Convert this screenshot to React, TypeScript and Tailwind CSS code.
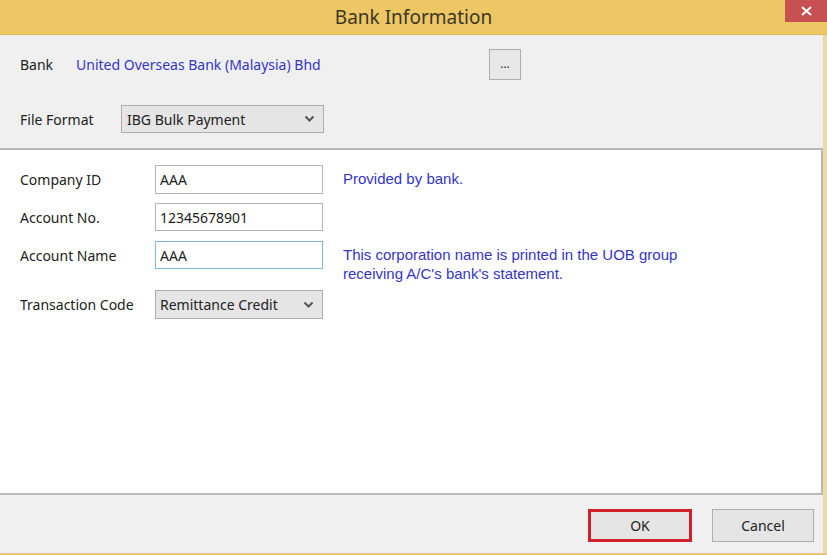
import React from "react";

const Chevron = () => (
  <svg width="11" height="8" viewBox="0 0 11 8" className="shrink-0">
    <path d="M1.5 1.5 L5.5 5.5 L9.5 1.5" fill="none" stroke="#555" strokeWidth="2" />
  </svg>
);

export default function App() {
  const ui = { fontFamily: '"Noto Sans", "Open Sans", sans-serif' };
  const arial = { fontFamily: '"Liberation Sans", Arial, sans-serif' };
  return (
    <div className="w-[827px] h-[555px] bg-[#f0f0f0] flex flex-col overflow-hidden text-[#222]" style={ui}>
      {/* title bar */}
      <div className="h-[35px] bg-[#ecc764] flex items-start shrink-0 border-b border-[#e0bb5a]">
        <div className="flex-1 h-[35px] flex items-center justify-center pl-[42px] text-[19px] text-[#3b3628]">
          Bank Information
        </div>
        <div className="w-[42px] h-[22px] bg-[#c75050] flex items-center justify-center text-white">
          <svg width="11" height="10" viewBox="0 0 11 10">
            <path d="M1 1 L10 9 M10 1 L1 9" stroke="white" strokeWidth="2" />
          </svg>
        </div>
      </div>

      <div className="flex-1 flex flex-col border-r-[4px] border-[#ecd9a4]">
        {/* top section */}
        <div className="h-[113px] shrink-0 flex flex-col pl-[20px]">
          <div className="flex items-center mt-[14px] h-[31px] text-[14px]">
            <span className="w-[56px]">Bank</span>
            <span className="text-[#3535c8] w-[413px]">United Overseas Bank (Malaysia) Bhd</span>
            <div className="w-[32px] h-[31px] border border-[#adadad] bg-[#e8e8e8] flex items-center justify-center text-[12px] text-[#333] leading-none pb-[2px]">
              ...
            </div>
          </div>
          <div className="flex items-center mt-[25px] h-[28px] text-[14px]">
            <span className="w-[101px]">File Format</span>
            <div className="w-[203px] h-[28px] border border-[#adadad] bg-[#e5e5e5] flex items-center justify-between pl-[5px] pr-[8px]">
              <span>IBG Bulk Payment</span>
              <Chevron />
            </div>
          </div>
        </div>

        {/* white panel */}
        <div className="flex-1 bg-white border-t-2 border-b-2 border-r-2 border-[#b9b9b9] flex flex-col pl-[20px] pt-[15px] text-[14px]">
          <div className="flex items-center h-[29px]">
            <span className="w-[135px]">Company ID</span>
            <div className="w-[168px] h-[29px] border border-[#b5b5b5] flex items-center pl-[4px]">AAA</div>
            <span className="ml-[20px] text-[#3535c8] text-[15px]" style={arial}>Provided by bank.</span>
          </div>
          <div className="flex items-center h-[28px] mt-[9px]">
            <span className="w-[135px]">Account No.</span>
            <div className="w-[168px] h-[28px] border border-[#b5b5b5] flex items-center pl-[4px]">12345678901</div>
          </div>
          <div className="flex items-start h-[28px] mt-[10px]">
            <span className="w-[135px] h-[28px] flex items-center">Account Name</span>
            <div className="w-[168px] h-[28px] border border-[#7eb4ea] flex items-center pl-[4px]">AAA</div>
            <div className="ml-[20px] mt-[4px] text-[#3535c8] text-[15px] leading-[19px]" style={arial}>
              <div>This corporation name is printed in the UOB group</div>
              <div>receiving A/C's bank's statement.</div>
            </div>
          </div>
          <div className="flex items-center h-[29px] mt-[21px]">
            <span className="w-[135px]">Transaction Code</span>
            <div className="w-[168px] h-[29px] border border-[#adadad] bg-[#e5e5e5] flex items-center justify-between pl-[4px] pr-[8px]">
              <span>Remittance Credit</span>
              <Chevron />
            </div>
          </div>
        </div>

        {/* footer */}
        <div className="h-[58px] shrink-0 flex items-start justify-end pt-[14px] pr-[9px] gap-[20px] text-[14px]">
          <div className="w-[104px] h-[33px] border-[3px] border-[#d0202a] bg-[#e5e5e5] flex items-center justify-center">
            OK
          </div>
          <div className="w-[102px] h-[33px] border border-[#adadad] bg-[#e5e5e5] flex items-center justify-center">
            Cancel
          </div>
        </div>
      </div>
      <div className="h-[2px] bg-[#e6c77c] shrink-0" />
    </div>
  );
}
